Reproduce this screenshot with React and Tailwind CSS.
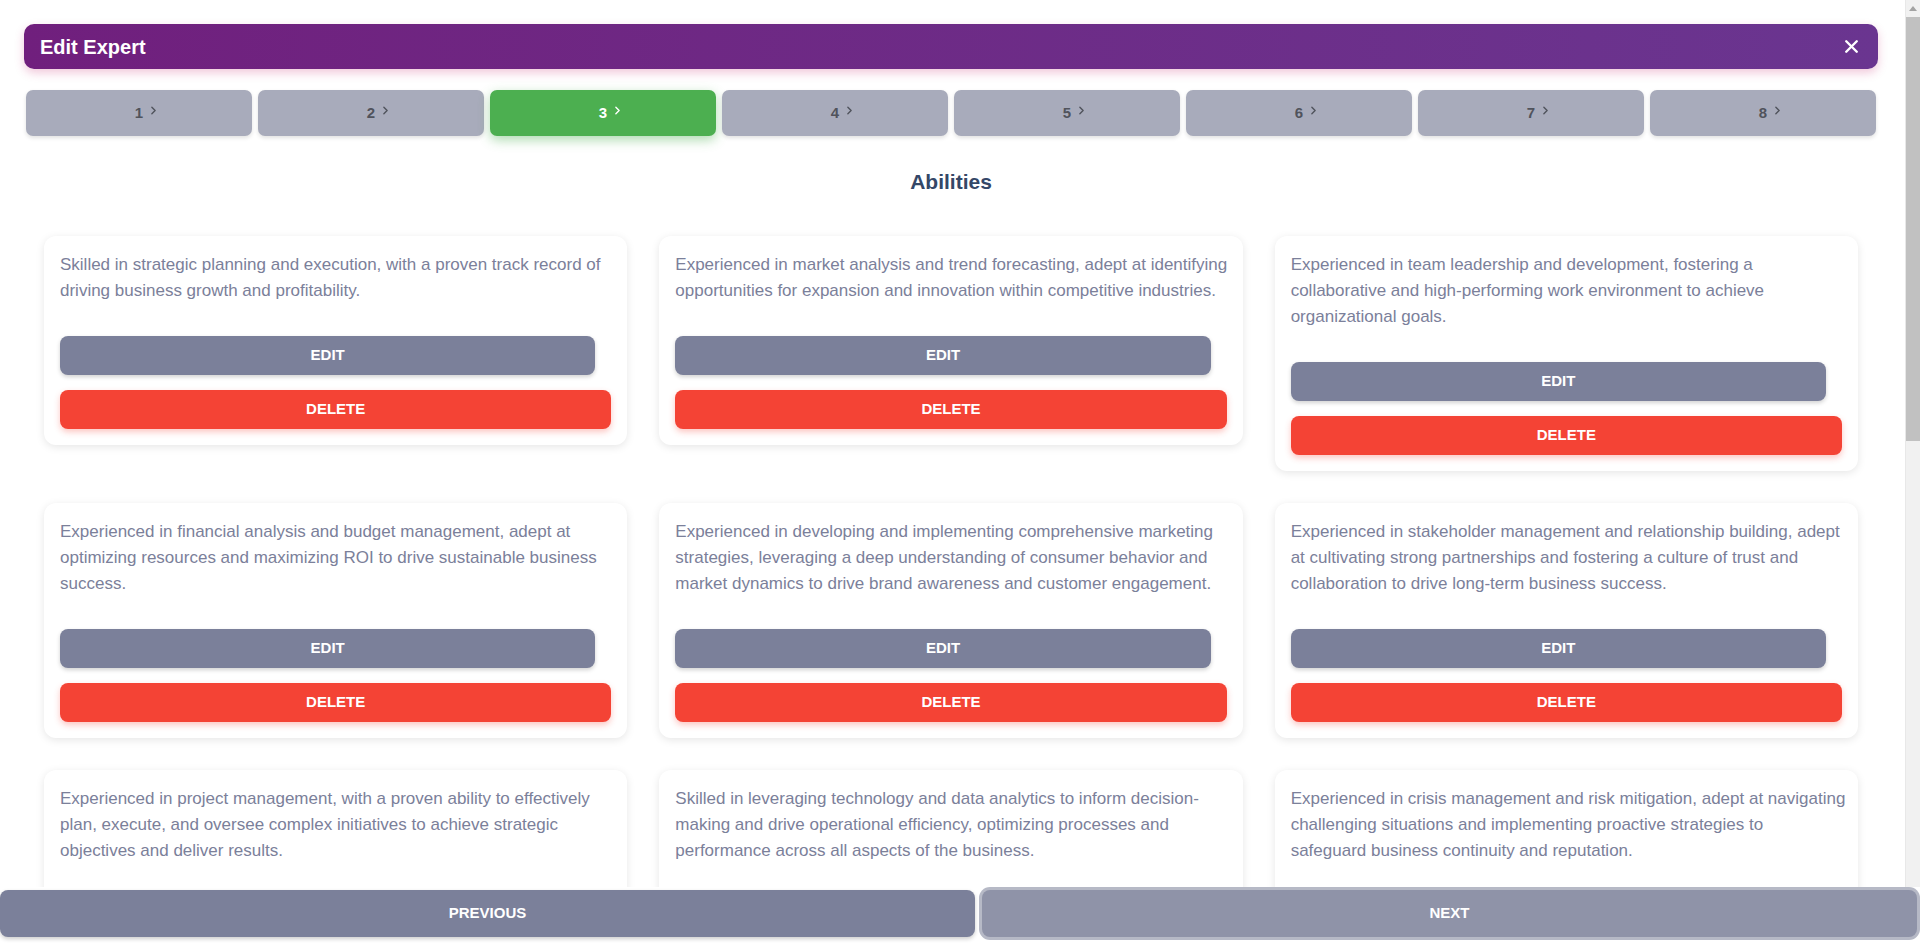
import { ChevronRight, X } from "lucide-react";

const steps = [1, 2, 3, 4, 5, 6, 7, 8];

const abilities = [
  [
    "Skilled in strategic planning and execution, with a proven track record of",
    "driving business growth and profitability.",
  ],
  [
    "Experienced in market analysis and trend forecasting, adept at identifying",
    "opportunities for expansion and innovation within competitive industries.",
  ],
  [
    "Experienced in team leadership and development, fostering a",
    "collaborative and high-performing work environment to achieve",
    "organizational goals.",
  ],
  [
    "Experienced in financial analysis and budget management, adept at",
    "optimizing resources and maximizing ROI to drive sustainable business",
    "success.",
  ],
  [
    "Experienced in developing and implementing comprehensive marketing",
    "strategies, leveraging a deep understanding of consumer behavior and",
    "market dynamics to drive brand awareness and customer engagement.",
  ],
  [
    "Experienced in stakeholder management and relationship building, adept",
    "at cultivating strong partnerships and fostering a culture of trust and",
    "collaboration to drive long-term business success.",
  ],
  [
    "Experienced in project management, with a proven ability to effectively",
    "plan, execute, and oversee complex initiatives to achieve strategic",
    "objectives and deliver results.",
  ],
  [
    "Skilled in leveraging technology and data analytics to inform decision-",
    "making and drive operational efficiency, optimizing processes and",
    "performance across all aspects of the business.",
  ],
  [
    "Experienced in crisis management and risk mitigation, adept at navigating",
    "challenging situations and implementing proactive strategies to",
    "safeguard business continuity and reputation.",
  ],
  [
    "Experienced in negotiation and contract management, securing favorable",
    "terms with partners and suppliers while maintaining long-lasting",
    "business relationships.",
  ],
  [
    "Skilled in change management, guiding organizations through",
    "transformation initiatives with clear communication and a focus on",
    "employee engagement.",
  ],
  [
    "Experienced in product development, translating customer insights",
    "into innovative solutions that meet market needs and drive",
    "revenue growth.",
  ],
  [
    "Experienced in operations management, streamlining workflows and",
    "supply chains to reduce costs and improve overall service quality",
    "and delivery times.",
  ],
  [
    "Skilled in public speaking and presentation, communicating complex",
    "ideas clearly to executives, investors, and diverse audiences",
    "across the organization.",
  ],
  [
    "Experienced in mergers and acquisitions, conducting due diligence and",
    "leading integration efforts to maximize value creation for all",
    "stakeholders involved.",
  ],
  [
    "Experienced in customer experience strategy, designing journeys that",
    "increase satisfaction, loyalty, and retention across digital and",
    "physical channels.",
  ],
  [
    "Skilled in talent acquisition and workforce planning, building strong",
    "teams aligned with company culture and long-term strategic",
    "objectives.",
  ],
  [
    "Experienced in regulatory compliance and corporate governance,",
    "ensuring business practices meet legal standards and ethical",
    "expectations.",
  ],
];

export default function App() {
  const current = 3;

  return (
    <div
      className="h-screen flex flex-col bg-white overflow-hidden"
      style={{ fontFamily: '"Liberation Sans", Arial, sans-serif' }}
    >
      <div className="flex-1 min-h-0 flex">
        {/* ===== Scrollable content ===== */}
        <div className="flex-1 overflow-y-auto pt-6 pl-6 pr-[27px] pb-6">
          {/* ===== Header ===== */}
          <div className="h-[45px] rounded-[10px] bg-gradient-to-r from-[#701f7d] to-[#6a3590] flex items-center justify-between pl-4 pr-[16px] shadow-[0_4px_10px_rgba(200,40,110,0.25)]">
            <h2 className="text-white font-bold text-[20px] leading-none">
              Edit Expert
            </h2>
            <button className="text-white">
              <X size={21} strokeWidth={2.8} />
            </button>
          </div>

          {/* ===== Steps ===== */}
          <div className="mt-[21px] px-[2px] grid grid-cols-8 gap-[6px]">
            {steps.map((s) => (
              <button
                key={s}
                className={
                  s === current
                    ? "h-[46px] rounded-[7px] bg-[#4caf50] text-white font-bold text-[15px] flex items-center justify-center shadow-[0_4px_12px_rgba(76,175,80,0.45)]"
                    : "h-[46px] rounded-[7px] bg-[#a8abbb] text-[#50535c] font-bold text-[15px] flex items-center justify-center shadow-[0_2px_4px_rgba(0,0,0,0.12)]"
                }
              >
                <span className="relative">
                  {s}
                  <ChevronRight
                    size={13}
                    strokeWidth={2.6}
                    className="absolute left-full top-[2px] ml-[4px]"
                  />
                </span>
              </button>
            ))}
          </div>

          {/* ===== Title ===== */}
          <h3 className="mt-8 mb-10 text-center text-[21px] leading-[28px] font-bold text-[#344767]">
            Abilities
          </h3>

          {/* ===== Abilities grid ===== */}
          <div className="px-5 grid grid-cols-3 gap-8 items-start">
            {abilities.map((lines, i) => (
              <div
                key={i}
                className="bg-white rounded-xl p-4 shadow-[0_2px_8px_rgba(0,0,0,0.1)]"
              >
                <p className="text-[17px] leading-[26px] text-[#7b809a] whitespace-nowrap">
                  {lines.map((l, j) => (
                    <span key={j} className="block">
                      {l}
                    </span>
                  ))}
                </p>

                <div className="mt-8 flex flex-col gap-[15px]">
                  <button className="mr-4 h-[39px] rounded-lg bg-[#7b809a] text-white font-bold text-[15px] uppercase shadow-[0_2px_4px_rgba(0,0,0,0.18)]">
                    Edit
                  </button>
                  <button className="h-[39px] rounded-lg bg-[#f44335] text-white font-bold text-[15px] uppercase shadow-[0_3px_6px_rgba(244,67,53,0.3)]">
                    Delete
                  </button>
                </div>
              </div>
            ))}
          </div>
        </div>

        {/* ===== Scrollbar ===== */}
        <div className="w-[15px] shrink-0 bg-[#f1f1f1] border-l border-[#e8e8e8] flex flex-col items-center">
          <div className="h-[17px] w-full flex items-center justify-center">
            <svg width="8" height="5" viewBox="0 0 8 5">
              <path d="M0 5 L4 0 L8 5 Z" fill="#a3a3a3" />
            </svg>
          </div>
          <div className="w-full h-[424px] bg-[#c1c1c1]" />
        </div>
      </div>

      {/* ===== Footer buttons ===== */}
      <div className="shrink-0 flex gap-[7px] pt-[3px] pr-[3px] pb-[13px]">
        <button className="w-[975px] shrink-0 h-[47px] rounded-lg bg-[#7b809a] text-white font-bold text-[15px] uppercase shadow-[0_2px_4px_rgba(0,0,0,0.2)]">
          Previous
        </button>
        <button className="flex-1 h-[47px] rounded-lg bg-[#8f93a8] text-white font-bold text-[15px] uppercase ring-[3px] ring-[#b6b9c6]">
          Next
        </button>
      </div>
    </div>
  );
}
